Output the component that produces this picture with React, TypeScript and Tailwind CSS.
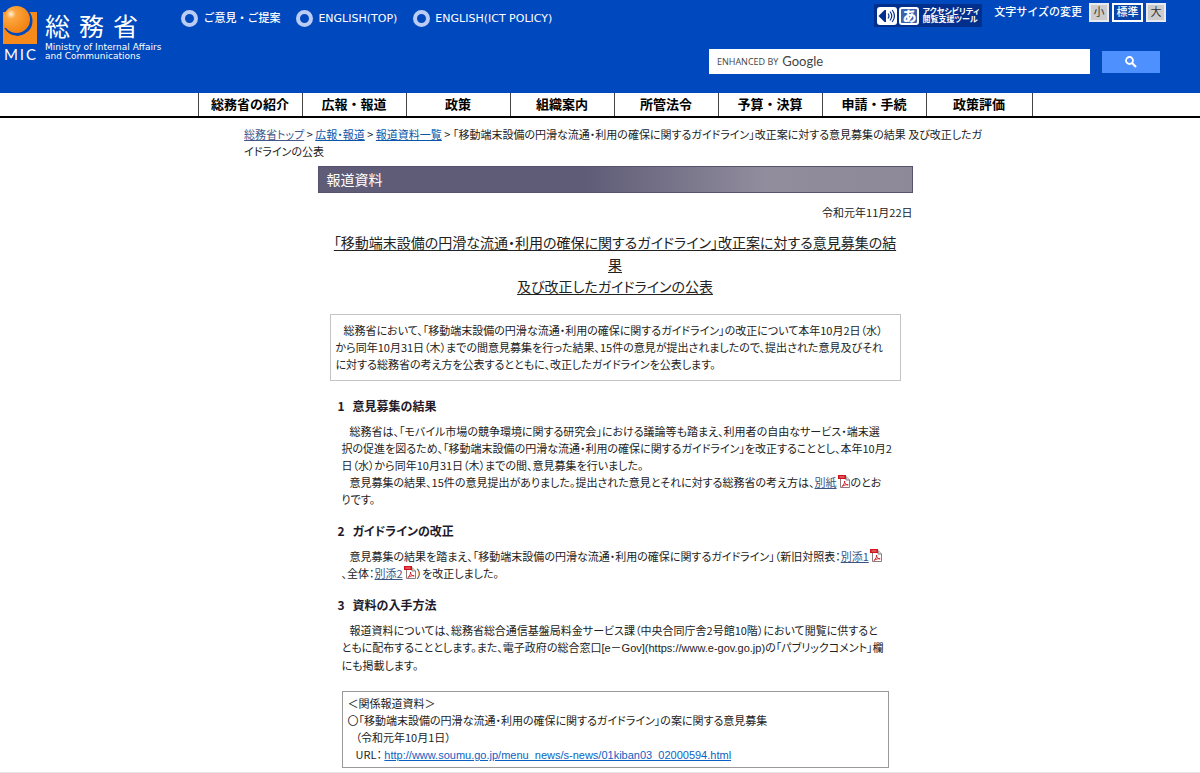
import type { ReactNode } from 'react';

const navItems = [
  '総務省の紹介',
  '広報・報道',
  '政策',
  '組織案内',
  '所管法令',
  '予算・決算',
  '申請・手続',
  '政策評価',
];

const utilityLinks = ['ご意見・ご提案', 'ENGLISH(TOP)', 'ENGLISH(ICT POLICY)'];

function Line({ indent, children }: { indent?: boolean; children: ReactNode }) {
  return <span className={indent ? 'block pl-2 whitespace-nowrap' : 'block whitespace-nowrap'}>{children}</span>;
}

function PdfIcon() {
  return (
    <svg className="mx-px inline-block h-[14px] w-3 align-[-2px]" viewBox="0 0 12 14" aria-hidden="true">
      <path d="M2.5 1.5h5.5l3.5 3.5v7.500h-9z" fill="#fff" stroke="#8a7d7d" />
      <path d="M8 1.500v3.500h3.500" fill="#ddd" stroke="#8a7d7d" />
      <rect x="0" y="0" width="8" height="4" fill="#d3121c" />
      <path d="M1.500 2h5" stroke="#f5b5b5" strokeWidth="0.800" />
      <path d="M4 11.500c1.800-1.600 2.800-4 2.600-5.500-.6 1.600 1.400 4 3.600 3.900-2 -.5-4 .1-6.200 1.600z" fill="none" stroke="#d3121c" strokeWidth="0.900" />
    </svg>
  );
}

function DocLink({ children }: { children: ReactNode }) {
  return (
    <>
      <a href="#" className="text-[#3b5480] underline">{children}</a>
      <PdfIcon />
    </>
  );
}

function Section({ no, title, children }: { no: number; title: string; children: ReactNode }) {
  return (
    <section className="mb-[14px] pl-6">
      <h3 className="mb-[9px] -ml-1 flex gap-2 text-xs leading-[17px] font-bold text-[#221a2a]">
        <span>{no}</span>
        <span>{title}</span>
      </h3>
      <div>{children}</div>
    </section>
  );
}

function Logo() {
  return (
    <a href="#" className="flex gap-2 text-white">
      <span className="flex w-[34px] flex-col items-center">
        <svg className="h-[40px] w-[34px]" viewBox="0 0 34 40" aria-hidden="true">
          <defs>
            <radialGradient id="ball" cx="0.300" cy="0.300" r="0.700">
              <stop offset="0" stopColor="#fff3dc" />
              <stop offset="0.250" stopColor="#fba640" />
              <stop offset="1" stopColor="#f48413" />
            </radialGradient>
          </defs>
          <rect x="0" y="6" width="34" height="32" fill="#f68b1c" />
          <circle cx="14.500" cy="15" r="15" fill="#0048bd" />
          <path d="M0 6h4v16h-4z" fill="#f68b1c" />
          <path d="M1 23a15 15 0 0 0 24 3" fill="none" stroke="#f68b1c" strokeWidth="1.500" />
          <circle cx="13.500" cy="13.500" r="13.500" fill="url(#ball)" />
        </svg>
        <span className="flex w-full justify-between px-px font-['Lato'] text-[15px] leading-4">
          <span>M</span>
          <span>I</span>
          <span>C</span>
        </span>
      </span>
      <span className="pt-[5px]">
        <span className="flex gap-[9px] text-[25px] leading-[32px]">
          <span>総</span>
          <span>務</span>
          <span>省</span>
        </span>
        <span className="block font-['DejaVu_Sans'] text-[9px] leading-[9px] whitespace-nowrap">
          Ministry of Internal Affairs
          <br />
          and Communications
        </span>
      </span>
    </a>
  );
}

function AccessibilityTool() {
  return (
    <a href="#" className="mt-px flex h-[23px] items-center gap-[2px] bg-[#032f8c] px-[3px] text-white">
      <svg className="h-[18px] w-5" viewBox="0 0 20 18" aria-hidden="true">
        <rect width="20" height="18" rx="3" fill="#fff" />
        <path d="M1.500 9l6-6h1.500v12h-1.500z" fill="#032f8c" />
        <path d="M11 6.500q2 2.500 0 5M13 4.500q3.500 4.500 0 9M15.200 3q4.500 6 0 12" fill="none" stroke="#032f8c" strokeWidth="1.200" />
      </svg>
      <span className="mr-px flex h-[18px] w-5 items-center justify-center rounded-[3px] border-2 border-white bg-[#3f62b0] text-sm leading-none font-black">
        あ
      </span>
      <span className="text-[8px] leading-[8px] font-bold whitespace-nowrap [font-feature-settings:'palt']">
        アクセシビリティ
        <br />
        閲覧支援ツール
      </span>
    </a>
  );
}

function Header() {
  return (
    <header className="flex h-[93px] justify-between bg-[#0048bd] pl-[3px] text-white">
      <div className="flex">
        <div className="pt-[6px]">
          <Logo />
        </div>
        <ul className="flex gap-4 pt-[10px] pl-5 text-[11px] leading-4 font-medium whitespace-nowrap">
          {utilityLinks.map((label) => (
            <li key={label}>
              <a href="#" className="flex items-center gap-[5px]">
                <span className="size-[17px] rounded-full border-4 border-[#bccdf5]" />
                <span className="font-['DejaVu_Sans','Noto_Sans_CJK_JP',sans-serif]">{label}</span>
              </a>
            </li>
          ))}
        </ul>
      </div>

      <div className="pt-[3px] pr-[34px]">
        <div className="flex items-start justify-end gap-3">
          <AccessibilityTool />
          <div className="flex items-center gap-[3px] text-[11px] leading-none">
            <span className="mr-1 font-medium">文字サイズの変更</span>
            <button type="button" className="h-[19px] w-5 border-2 border-[#e8eaf0] bg-[#ccc] text-[#333]">小</button>
            <button type="button" className="h-[19px] w-[31px] border-2 border-white bg-[#0c43a8] font-medium">標準</button>
            <button type="button" className="h-[19px] w-5 border-2 border-[#e8eaf0] bg-[#ccc] text-[#333]">大</button>
          </div>
        </div>
        <form className="mt-[22px] mr-[6px] flex items-center gap-3">
          <label className="flex h-[25px] w-[381px] items-center bg-white pl-2 text-[#444]">
            <span className="mr-1 text-[9px] whitespace-nowrap font-['Open_Sans']">ENHANCED BY</span>
            <span className="text-[13px] font-['Lato']">Google</span>
            <input type="text" className="min-w-0 flex-1 bg-transparent text-xs outline-none" />
          </label>
          <button type="button" aria-label="検索" className="flex h-[22px] w-[58px] items-center justify-center bg-[#4d90fe]">
            <svg className="size-3" viewBox="0 0 12 12" aria-hidden="true">
              <circle cx="4.500" cy="4.500" r="3.500" fill="none" stroke="#fff" strokeWidth="1.800" />
              <path d="M7 7l4 4" stroke="#fff" strokeWidth="2.200" />
            </svg>
          </button>
        </form>
      </div>
    </header>
  );
}

export default function App() {
  return (
    <div className="min-h-screen border-b border-[#e4e4e4] bg-white font-['Liberation_Sans','Noto_Sans_CJK_JP',sans-serif] text-[#222]">
      <Header />

      <nav className="flex justify-center border-b-2 border-black pl-[30px]">
        <ul className="flex border-r border-[#444] text-[13px] leading-[23px] font-bold text-black">
          {navItems.map((item) => (
            <li key={item} className="w-[104px] border-l border-[#444] text-center last:w-[106px]">
              <a href="#">{item}</a>
            </li>
          ))}
        </ul>
      </nav>

      <main className="pl-[30px] text-[11px] leading-[17px] font-['Noto_Sans_CJK_JP',sans-serif] [font-feature-settings:'palt']">
        <div className="mx-auto w-[742px]">
          <div className="pt-2">
            <Line>
              <a href="#" className="text-[#44578a] underline">総務省トップ</a>
              {' > '}
              <a href="#" className="text-[#0b56a8] underline">広報・報道</a>
              {' > '}
              <a href="#" className="text-[#0b56a8] underline">報道資料一覧</a>
              {' > '}
              「移動端末設備の円滑な流通・利用の確保に関するガイドライン」改正案に対する意見募集の結果 及び改正したガ
            </Line>
            <Line>イドラインの公表</Line>
          </div>
        </div>

        <article className="mx-auto mt-[6px] w-[595px]">
          <h1 className="border border-[#56536f] bg-linear-to-r from-[#5f5c77] from-45% via-[#918d9d] via-75% to-[#8d8999] pl-2 text-sm leading-[25px] text-white">
            報道資料
          </h1>
          <p className="mt-[11px] text-right">令和元年11月22日</p>
          <h2 className="mt-[10px] text-center text-sm leading-[22px] underline underline-offset-2">
            <Line>「移動端末設備の円滑な流通・利用の確保に関するガイドライン」改正案に対する意見募集の結</Line>
            <Line>果</Line>
            <Line>及び改正したガイドラインの公表</Line>
          </h2>

          <div className="mx-3 mt-[17px] mb-4 border border-[#c4c4c4] px-[5px] py-[7px]">
            <Line indent>総務省において、「移動端末設備の円滑な流通・利用の確保に関するガイドライン」の改正について本年10月2日（水）</Line>
            <Line>から同年10月31日（木）までの間意見募集を行った結果、15件の意見が提出されましたので、提出された意見及びそれ</Line>
            <Line>に対する総務省の考え方を公表するとともに、改正したガイドラインを公表します。</Line>
          </div>

          <Section no={1} title="意見募集の結果">
            <Line indent>総務省は、「モバイル市場の競争環境に関する研究会」における議論等も踏まえ、利用者の自由なサービス・端末選</Line>
            <Line>択の促進を図るため、「移動端末設備の円滑な流通・利用の確保に関するガイドライン」を改正することとし、本年10月2</Line>
            <Line>日（水）から同年10月31日（木）までの間、意見募集を行いました。</Line>
            <Line indent>
              意見募集の結果、15件の意見提出がありました。提出された意見とそれに対する総務省の考え方は、<DocLink>別紙</DocLink>のとお
            </Line>
            <Line>りです。</Line>
          </Section>

          <Section no={2} title="ガイドラインの改正">
            <Line indent>
              意見募集の結果を踏まえ、「移動端末設備の円滑な流通・利用の確保に関するガイドライン」（新旧対照表：<DocLink>別添1</DocLink>
            </Line>
            <Line>
              、全体：<DocLink>別添2</DocLink>）を改正しました。
            </Line>
          </Section>

          <Section no={3} title="資料の入手方法">
            <Line indent>報道資料については、総務省総合通信基盤局料金サービス課（中央合同庁舎2号館10階）において閲覧に供すると</Line>
            <Line>
              ともに配布することとします。また、電子政府の総合窓口
              <span className="font-['Liberation_Sans','Noto_Sans_CJK_JP',sans-serif]">[e－Gov](https://www.e-gov.go.jp)</span>
              の「パブリックコメント」欄
            </Line>
            <Line>にも掲載します。</Line>
          </Section>

          <div className="mx-6 mt-[17px] border border-[#999] px-[5px] py-[3px]">
            <Line>＜関係報道資料＞</Line>
            <Line>〇「移動端末設備の円滑な流通・利用の確保に関するガイドライン」の案に関する意見募集</Line>
            <Line indent>（令和元年10月1日）</Line>
            <Line indent>
              URL：{' '}
              <a href="#" className="font-['Liberation_Sans'] text-[#0b62c4] underline">
                http://www.soumu.go.jp/menu_news/s-news/01kiban03_02000594.html
              </a>
            </Line>
          </div>
        </article>
      </main>
    </div>
  );
}
